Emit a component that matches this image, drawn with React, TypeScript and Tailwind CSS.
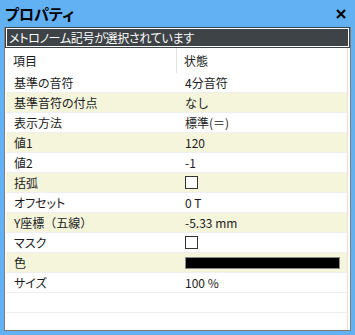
const rows: { label: string; value: string; kind?: "check" | "color" }[] = [
  { label: "基準の音符", value: "4分音符" },
  { label: "基準音符の付点", value: "なし" },
  { label: "表示方法", value: "標準(＝)" },
  { label: "値1", value: "120" },
  { label: "値2", value: "-1" },
  { label: "括弧", value: "", kind: "check" },
  { label: "オフセット", value: "0 T" },
  { label: "Y座標（五線）", value: "-5.33 mm" },
  { label: "マスク", value: "", kind: "check" },
  { label: "色", value: "", kind: "color" },
  { label: "サイズ", value: "100 %" },
  { label: "", value: "" },
  { label: "", value: "" },
];

export default function App() {
  return (
    <div className="w-[355px] h-[335px] bg-[#62b1f3] flex flex-col overflow-hidden font-['Noto_Sans_CJK_JP',sans-serif] text-[#1b1b1b]">
      <div className="h-[27px] shrink-0 flex items-center justify-between pl-[5px] pr-[9px]">
        <span className="text-[15px] font-bold leading-none text-black [font-feature-settings:'palt']">プロパティ</span>
        <svg width="10" height="10" viewBox="0 0 10 10">
          <path d="M1 1L9 9M9 1L1 9" stroke="#000" strokeWidth="2.2" />
        </svg>
      </div>

      <div className="ml-[4px] w-[347px] h-[304px] shrink-0 border border-[#7d7d7d] border-t-0 bg-white flex flex-col overflow-hidden">
        <div className="h-[21px] shrink-0 bg-[#3e4347] p-px">
          <div className="h-full border border-white text-white text-[12px] leading-[17px] pl-[2px] [font-feature-settings:'palt'] tracking-[-0.3px]">
            メトロノーム記号が選択されています
          </div>
        </div>

        <div className="flex-1 pl-px">
          <div className="w-[342px] border-r border-[#e3e3e3] h-full text-[12px]">
            <div className="h-[25px] flex">
              <div className="w-[171px] border-r border-[#e2e2e2] pl-[7px] flex items-center">項目</div>
              <div className="flex-1 pl-[7px] flex items-center">状態</div>
            </div>
            {rows.map((r, i) => (
              <div
                key={i}
                className={`h-[20px] flex border-b border-[#efefef] ${i % 2 === 1 && r.label ? "bg-[#f5f5dc]" : "bg-white"}`}
              >
                <div
                  className={`w-[172px] pl-[8px] flex items-center ${r.label.includes("（") ? "" : "[font-feature-settings:'palt']"}`}
                >
                  {r.label}
                </div>
                <div className="flex-1 pl-[7px] flex items-center">
                  {r.kind === "check" && (
                    <div className="w-[13px] h-[13px] border border-[#333] bg-white" />
                  )}
                  {r.kind === "color" && (
                    <div className="w-[155px] h-[12px] border border-[#8a8a8a] bg-black" />
                  )}
                  {!r.kind && r.value}
                </div>
              </div>
            ))}
          </div>
        </div>
      </div>
    </div>
  );
}
